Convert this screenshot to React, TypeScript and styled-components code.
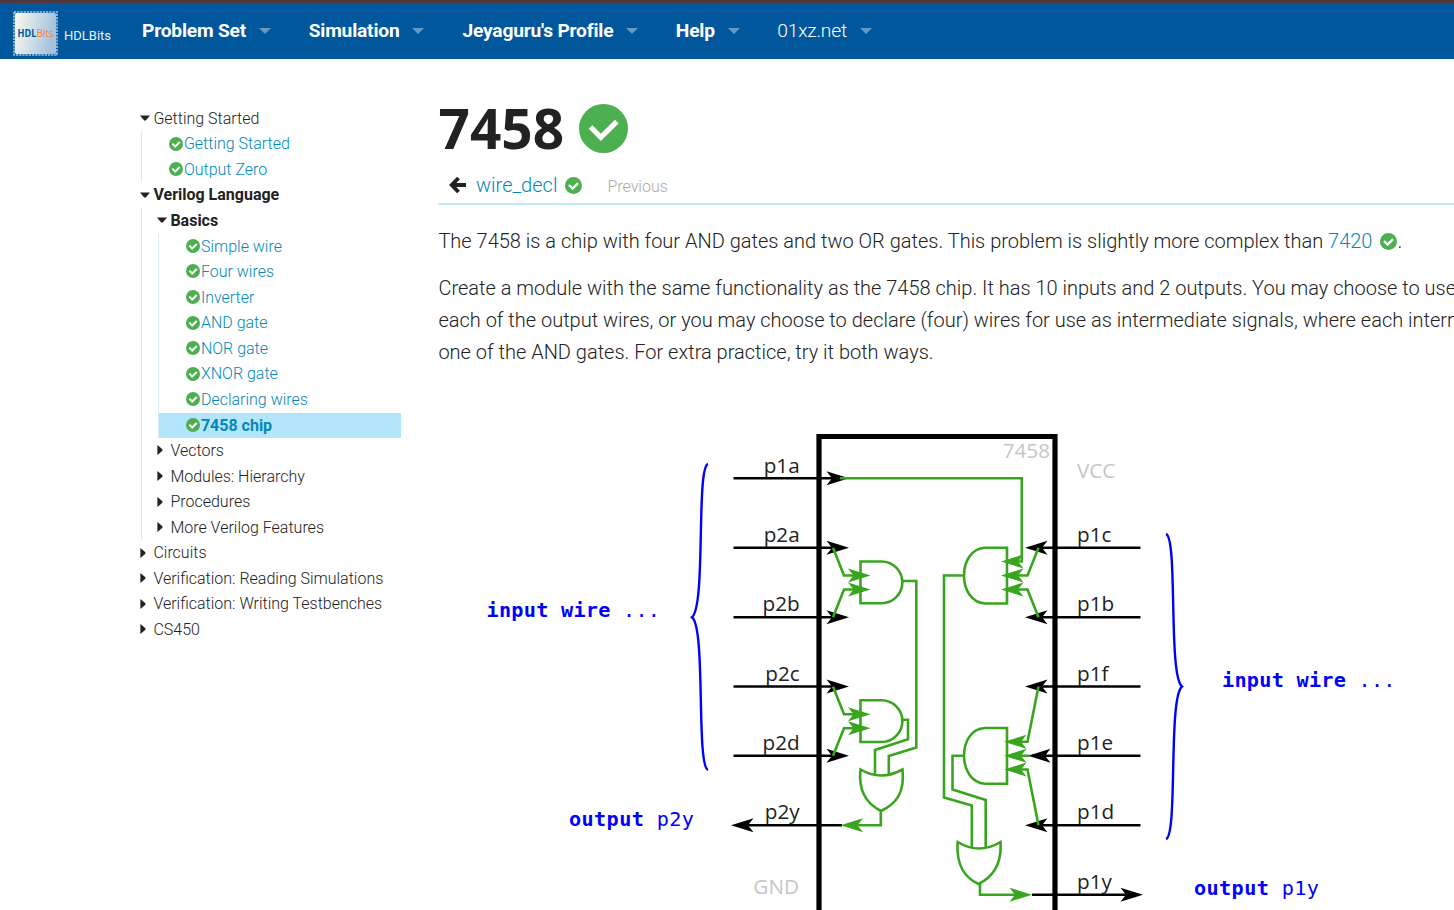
import React from 'react';
import styled, { createGlobalStyle } from 'styled-components';

const Global = createGlobalStyle`
  html, body { margin: 0; padding: 0; background: #fff; overflow: hidden; }
  body { font-family: Roboto, "Liberation Sans", sans-serif; font-weight: 300; color: #222; width: 1454px; height: 910px; }
  * { box-sizing: border-box; }
`;

const Page = styled.div`
  width: 1454px;
  height: 910px;
  overflow: hidden;
`;

const TopBar = styled.header`
  display: flex;
  align-items: flex-start;
  height: 59px;
  border-top: 3px solid #51383f;
  background: #01579b;
  color: #fff;
`;

const Brand = styled.a`
  display: flex;
  width: 142px;
  padding: 8px 0 0 13px;
  font: 400 13px/48px Roboto, sans-serif;
  color: #e8f2fb;
  gap: 5px;
`;

const BrandName = styled.span`
  padding-top: 1px;
`;

const NavItem = styled.a<{ $width: number; $light?: boolean }>`
  display: flex;
  align-items: center;
  width: ${(p) => p.$width}px;
  height: 55px;
  gap: 13px;
  font-size: 19.2px;
  letter-spacing: -0.2px;
  font-weight: ${(p) => (p.$light ? 300 : 700)};
  white-space: nowrap;
`;

const NavCaret = styled.span`
  border: 6px solid transparent;
  border-top-color: #669ac3;
  border-bottom: 0;
  margin-top: 1px;
`;

const Body = styled.div`
  display: flex;
`;

const Sidebar = styled.nav`
  width: 438px;
  flex: none;
  padding: 46.8px 37px 0 141px;
  font-size: 16px;
  line-height: 25.57px;
`;

const Row = styled.div<{ $bold?: boolean }>`
  display: flex;
  align-items: center;
  height: 25.57px;
  font-weight: ${(p) => (p.$bold ? 700 : 300)};
  white-space: nowrap;
`;

const Marker = styled.span`
  display: flex;
  width: 13.4px;
  margin: -1px 0 0 -1px;
  flex: none;
`;

const Branch = styled.div`
  border-left: 1px solid #d5edf9;
  padding-left: 16px;
`;

const Leaf = styled.a<{ $active?: boolean }>`
  display: flex;
  align-items: center;
  gap: 0.9px;
  height: 25.57px;
  padding-left: 27px;
  margin-left: -16px;
  background: ${(p) => (p.$active ? '#b3e5fc' : 'transparent')};
  color: #0288b9;
  font-weight: ${(p) => (p.$active ? 700 : 300)};
  white-space: nowrap;
  svg { margin-top: -1px; }
`;

const Main = styled.main`
  flex: none;
  width: 1016px;
`;

const Title = styled.h1`
  display: flex;
  align-items: center;
  gap: 15.4px;
  margin: 0;
  height: 137px;
  padding-left: 0.5px;
  font: 700 54.900px/137px "Open Sans", sans-serif;
  svg { margin-top: 1.500px; }
`;

const Pager = styled.div`
  display: flex;
  align-items: center;
  margin-top: -28px;
  height: 37px;
  border-bottom: 2px solid #c3eaf2;
  padding-left: 11px;
  font-size: 20px;
  svg { margin-top: -1px; }
`;

const PagerLink = styled.a`
  color: #0288b9;
  margin: -2px 8px 0 9px;
`;

const PagerHint = styled.span`
  margin-left: 25px;
  padding-top: 2px;
  font-size: 16px;
  color: #aaa;
`;

const Text = styled.p`
  margin: 0 0 15px;
  padding-left: 0.4px;
  font-size: 20px;
  line-height: 32px;
  white-space: nowrap;
`;

const Link = styled.a`
  color: #0288b9;
  svg { vertical-align: -2px; margin: 0 0.5px 0 7.5px; }
`;

const Copy = styled.div`
  padding-top: 20px;
`;

const Diagram = styled.svg`
  display: block;
  margin-top: 51px;
`;

const Check = ({ size }: { size: number }) => (
  <svg width={size} height={size} viewBox="0 0 50 50">
    <circle cx="25" cy="25" r="25" fill="#4caf50" />
    <path d="M11.800 23.500L22.300 34L38.500 18" fill="none" stroke="#fff" strokeWidth={size > 20 ? 5.2 : 7} />
  </svg>
);

const Tick = ({ open }: { open?: boolean }) => (
  <Marker>
    <svg width="10" height="10" viewBox="0 0 10 10">
      <path d={open ? 'M0 2.500h10l-4.200 5h-1.600z' : 'M0.400 0v10l5-4.300v-1.400z'} fill="#222" />
    </svg>
  </Marker>
);

const Logo = () => (
  <svg width="46" height="46" viewBox="0 0 46 46">
    <defs>
      <linearGradient id="chip" x1="0" x2="1" y1="0" y2="0.2">
        <stop offset="0" stopColor="#fbfbf0" />
        <stop offset="1" stopColor="#a5c3dd" />
      </linearGradient>
    </defs>
    <rect x="1" y="1" width="43" height="43" fill="none" stroke="#a8c9e4" strokeWidth="1.600" strokeDasharray="2.200 1" />
    <rect x="2" y="2" width="41" height="41" rx="1.500" fill="url(#chip)" />
    <text x="4.500" y="26.300" fontFamily="Open Sans" fontSize="10.400" fontWeight="700" fill="#01579b" textLength="18.800" lengthAdjust="spacingAndGlyphs">HDL</text>
    <text x="23.500" y="26.300" fontFamily="Open Sans" fontSize="10.400" fontWeight="400" fill="#f5821f" textLength="17" lengthAdjust="spacingAndGlyphs">Bits</text>
  </svg>
);

const nav = [
  { label: 'Problem Set', width: 166.7 },
  { label: 'Simulation', width: 153.8 },
  { label: "Jeyaguru's Profile", width: 213.3 },
  { label: 'Help', width: 101.5 },
  { label: '01xz.net', width: 110, light: true },
];

const basics = ['Simple wire', 'Four wires', 'Inverter', 'AND gate', 'NOR gate', 'XNOR gate', 'Declaring wires', '7458 chip'];

const Head = ({ x, y, left, color = '#000' }: { x: number; y: number; left?: boolean; color?: string }) => (
  <path d="M0 0L-22.500 -7L-17 0L-22.500 7z" fill={color} transform={`translate(${x} ${y})${left ? ' scale(-1 1)' : ''}`} />
);

const G = '#39a51f';

const leftPins: [string, number][] = [['p1a', 478.3], ['p2a', 547.7], ['p2b', 617.2], ['p2c', 686.5], ['p2d', 755.8], ['p2y', 825.2]];
const rightPins: [string, number][] = [['p1c', 547.7], ['p1b', 617.2], ['p1f', 686.5], ['p1e', 755.8], ['p1d', 825.2], ['p1y', 894.7]];

const Schematic = () => (
  <Diagram width="1016" height="491" viewBox="438 419 1016 491">
    <path d="M819 915V436.500H1055V915" fill="none" stroke="#000" strokeWidth="5.200" />
    <g stroke="#000" strokeWidth="2.600" fill="none">
      {leftPins.map(([n, y]) => <path key={n} d={`M${n === 'p2y' ? 740 : 733.5} ${y}H842`} />)}
      {rightPins.map(([n, y]) => <path key={n} d={`M1032 ${y}H${n === 'p1y' ? 1132 : 1140.5}`} />)}
    </g>
    {leftPins.map(([n, y]) => n === 'p2y' ? <Head key={n} x={731} y={y} left /> : <Head key={n} x={849} y={y} />)}
    {rightPins.map(([n, y]) => n === 'p1y' ? <Head key={n} x={1143} y={y} /> : <Head key={n} x={n === 'p1e' ? 1028 : 1025} y={y} left />)}
    <g fontFamily="Open Sans" fontSize="20.700" fontWeight="400" fill="#222">
      {leftPins.map(([n, y]) => <text key={n} x="799.700" y={y - 5.8} textAnchor="end">{n}</text>)}
      {rightPins.map(([n, y]) => <text key={n} x="1077" y={y - 5.8}>{n}</text>)}
    </g>
    <g fontFamily="Open Sans" fontSize="20.700" fontWeight="400" fill="#c6c6c6">
      <text x="1050" y="458.400" textAnchor="end">7458</text>
      <text x="1077" y="478">VCC</text>
      <text x="799" y="894.300" textAnchor="end">GND</text>
    </g>
    <g fill="none" stroke={G} strokeWidth="2.600">
      <path d="M840 478.300H1021.800V561.500H1012" />
      <path d="M833 547.700L844 575.500H856M833 617.200L844 589.500H856" />
      <path d="M860.500 561.500H881.500A20.850 20.850 0 0 1 881.500 603.200H860.500zM902 581H916.300V747.500L888.800 756V774" />
      <path d="M833 686.500L844 714.200H856M833 755.800L844 728.200H856" />
      <path d="M860.500 700.200H881.500A20.900 20.900 0 0 1 881.500 742H860.500zM902 719.800H908V739.200L875 750V774" />
      <path d="M860.500 769.500Q881 781.500 902.500 769.500C905 793 896 804 881 811C867 804 858 792 860.500 769.500zM880.800 811V825.200H854" />
      <path d="M1007 547.700H985C957 549 957 602 985 603.500H1007zM964 575.500H944V797.500L971.800 805.500V848" />
      <path d="M1038.500 547.700L1027.500 575.500H1012M1038.500 617.200L1027.500 589.500H1012" />
      <path d="M1007 728H985C957 729 957 782 985 783.700H1007zM964 755.800H952.500V789.500L985.700 800V848" />
      <path d="M1038.500 686.500L1027.500 741.800H1020M1030 755.800H1018M1038.500 825.200L1027.500 769.500H1020" />
      <path d="M957.700 842Q979 855 1000.500 842C1002 865 993 877 978.500 884C964 877 956 865 957.700 842zM980 884V894.700H1020" />
    </g>
    {[575.5, 589.5, 714.2, 728.2].map((y) => <Head key={y} x={870.5} y={y} color={G} />)}
    {[561.5, 575.5, 589.5].map((y) => <Head key={y} x={1001} y={y} left color={G} />)}
    {[741.8, 755.8, 769.5].map((y) => <Head key={y} x={1004} y={y} left color={G} />)}
    <Head x={840.5} y={825.2} left color={G} />
    <Head x={1032} y={894.7} color={G} />
    <g fill="none" stroke="#0000ff" strokeWidth="2.400">
      <path d="M708 464C696 468 706 606 692 617.200C706 628 696 765 708 770" />
      <path d="M1166 534C1178 538 1168 675 1182 686.500C1168 698 1178 835 1166 839" />
    </g>
    <g fontFamily="DejaVu Sans Mono" fontSize="20.200" fontWeight="400" fill="#0000ff">
      <text x="486.500" y="617" textLength="173.500"><tspan fontWeight="700">input wire</tspan> ...</text>
      <text x="1222" y="686.500" textLength="173.500"><tspan fontWeight="700">input wire</tspan> ...</text>
      <text x="569" y="825.500" textLength="125"><tspan fontWeight="700">output</tspan> p2y</text>
      <text x="1194" y="895" textLength="125"><tspan fontWeight="700">output</tspan> p1y</text>
    </g>
  </Diagram>
);

export default function App() {
  return (
    <Page>
      <Global />
      <TopBar>
        <Brand><Logo /><BrandName>HDLBits</BrandName></Brand>
        {nav.map((n) => (
          <NavItem key={n.label} $width={n.width} $light={n.light}>{n.label}<NavCaret /></NavItem>
        ))}
      </TopBar>
      <Body>
        <Sidebar>
          <Row><Tick open />Getting Started</Row>
          <Branch>
            <Leaf><Check size={14} />Getting Started</Leaf>
            <Leaf><Check size={14} />Output Zero</Leaf>
          </Branch>
          <Row $bold><Tick open />Verilog Language</Row>
          <Branch>
            <Row $bold><Tick open />Basics</Row>
            <Branch>
              {basics.map((b, i) => <Leaf key={b} $active={i === 7}><Check size={14} />{b}</Leaf>)}
            </Branch>
            {['Vectors', 'Modules: Hierarchy', 'Procedures', 'More Verilog Features'].map((t) => <Row key={t}><Tick />{t}</Row>)}
          </Branch>
          {['Circuits', 'Verification: Reading Simulations', 'Verification: Writing Testbenches', 'CS450'].map((t) => <Row key={t}><Tick />{t}</Row>)}
        </Sidebar>
        <Main>
          <Title>7458<Check size={49} /></Title>
          <Pager>
            <svg width="18" height="18" viewBox="0 0 18 18"><path d="M9.500 2L2.800 9L9.500 16M3 9H17" fill="none" stroke="#222" strokeWidth="3.900" /></svg>
            <PagerLink>wire_decl</PagerLink><Check size={17} />
            <PagerHint>Previous</PagerHint>
          </Pager>
          <Copy>
            <Text>The 7458 is a chip with four AND gates and two OR gates. This problem is slightly more complex than <Link>7420<Check size={17} /></Link>.</Text>
            <Text>
              Create a module with the same functionality as the 7458 chip. It has 10 inputs and 2 outputs. You may choose to use<br />
              each of the output wires, or you may choose to declare (four) wires for use as intermediate signals, where each intern<br />
              one of the AND gates. For extra practice, try it both ways.
            </Text>
          </Copy>
          <Schematic />
        </Main>
      </Body>
    </Page>
  );
}
